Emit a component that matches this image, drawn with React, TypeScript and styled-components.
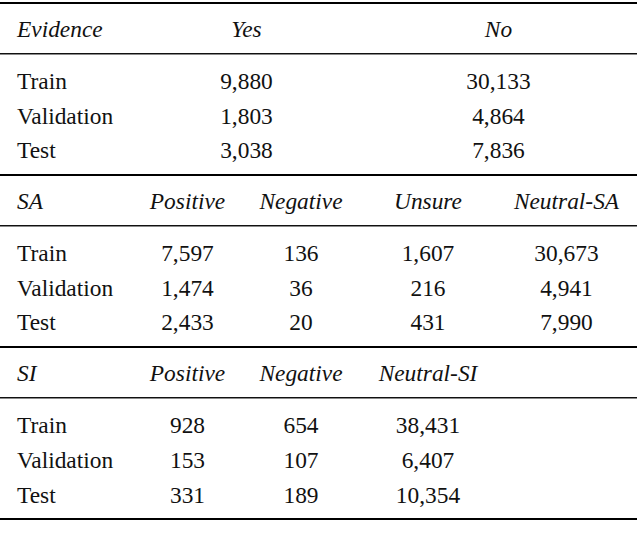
import React from 'react';
import styled, { createGlobalStyle } from 'styled-components';

const GlobalStyle = createGlobalStyle`
  html, body {
    margin: 0;
    padding: 0;
    background: #ffffff;
  }
`;

type Cell = { text: string; span?: number };
type Block = {
  head: Cell[];
  rows: Cell[][];
};

const blocks: Block[] = [
  {
    head: [{ text: 'Evidence' }, { text: 'Yes', span: 2 }, { text: 'No', span: 2 }],
    rows: [
      [{ text: 'Train' }, { text: '9,880', span: 2 }, { text: '30,133', span: 2 }],
      [{ text: 'Validation' }, { text: '1,803', span: 2 }, { text: '4,864', span: 2 }],
      [{ text: 'Test' }, { text: '3,038', span: 2 }, { text: '7,836', span: 2 }],
    ],
  },
  {
    head: [
      { text: 'SA' },
      { text: 'Positive' },
      { text: 'Negative' },
      { text: 'Unsure' },
      { text: 'Neutral-SA' },
    ],
    rows: [
      [{ text: 'Train' }, { text: '7,597' }, { text: '136' }, { text: '1,607' }, { text: '30,673' }],
      [{ text: 'Validation' }, { text: '1,474' }, { text: '36' }, { text: '216' }, { text: '4,941' }],
      [{ text: 'Test' }, { text: '2,433' }, { text: '20' }, { text: '431' }, { text: '7,990' }],
    ],
  },
  {
    head: [
      { text: 'SI' },
      { text: 'Positive' },
      { text: 'Negative' },
      { text: 'Neutral-SI' },
      { text: '' },
    ],
    rows: [
      [{ text: 'Train' }, { text: '928' }, { text: '654' }, { text: '38,431' }, { text: '' }],
      [{ text: 'Validation' }, { text: '153' }, { text: '107' }, { text: '6,407' }, { text: '' }],
      [{ text: 'Test' }, { text: '331' }, { text: '189' }, { text: '10,354' }, { text: '' }],
    ],
  },
];

const App = () => {
  return (
    <>
      <GlobalStyle />
      <Page>
        <Table>
          {blocks.map((block, b) => (
            <Section key={b}>
              <HeadRow>
                {block.head.map((c, i) => (
                  <HeadCell key={i} $first={i === 0} $span={c.span ?? 1}>
                    {c.text}
                  </HeadCell>
                ))}
              </HeadRow>
              <Body>
                {block.rows.map((row, r) => (
                  <Row key={r}>
                    {row.map((c, i) => (
                      <DataCell key={i} $first={i === 0} $span={c.span ?? 1}>
                        {c.text}
                      </DataCell>
                    ))}
                  </Row>
                ))}
              </Body>
            </Section>
          ))}
        </Table>
      </Page>
    </>
  );
};

export default App;

const Page = styled.div`
  width: 640px;
  height: 552px;
  padding-top: 2px;
  box-sizing: border-box;
  background: #fff;
  color: #111;
  font-family: "Liberation Serif";
`;

const Table = styled.div`
  width: 637px;
  border-bottom: 2px solid #000;
`;

const Section = styled.div`
  border-top: 2px solid #000;
`;

const HeadRow = styled.div`
  display: grid;
  grid-template-columns: 133px 109px 118px 136px 141px;
  height: 49px;
  border-bottom: 1px solid #111;
  box-shadow: 0 1px 0 #8a8a8a;
`;

const Body = styled.div`
  padding-top: 10px;
  padding-bottom: 6px;
`;

const Row = styled.div`
  display: grid;
  grid-template-columns: 133px 109px 118px 136px 141px;
  height: 34.7px;
`;

const HeadCell = styled.div<{ $first: boolean; $span: number }>`
  grid-column: span ${(p) => p.$span};
  font-family: "Liberation Serif";
  font-style: italic;
  font-size: 23.4px;
  line-height: 50px;
  white-space: nowrap;
  text-align: ${(p) => (p.$first ? 'left' : 'center')};
  padding-left: ${(p) => (p.$first ? '17px' : '0')};
`;

const DataCell = styled.div<{ $first: boolean; $span: number }>`
  grid-column: span ${(p) => p.$span};
  font-family: "Liberation Serif";
  font-size: 23.4px;
  line-height: 34.7px;
  white-space: nowrap;
  text-align: ${(p) => (p.$first ? 'left' : 'center')};
  padding-left: ${(p) => (p.$first ? '17px' : '0')};
`;
